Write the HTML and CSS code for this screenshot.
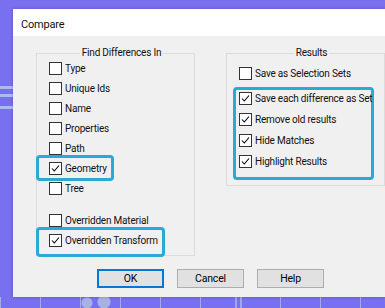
FILE: index.html
```html
<!DOCTYPE html>
<html lang="en">
<head>
    <meta charset="UTF-8">
    <meta name="viewport" content="width=device-width, initial-scale=1.0">
    <title>Compare</title>
    <link rel="stylesheet" href="styles.css">
</head>
<body>
    <div class="dialog">
        <div class="titlebar">Compare</div>
        <div class="dialog-body">
            <div class="groups">
                <fieldset class="group group-find">
                    <legend>Find Differences In</legend>
                    <div class="rows">
                        <label class="check"><span class="box"></span>Type</label>
                        <label class="check"><span class="box"></span>Unique Ids</label>
                        <label class="check"><span class="box"></span>Name</label>
                        <label class="check"><span class="box"></span>Properties</label>
                        <label class="check"><span class="box"></span>Path</label>
                        <div class="mark mark-geometry">
                            <label class="check"><span class="box"><svg viewBox="0 0 11 11"><path d="M2 5.5 L4.3 8 L9 2.5"/></svg></span>Geometry</label>
                        </div>
                        <label class="check"><span class="box"></span>Tree</label>
                        <div class="spacer"></div>
                        <label class="check"><span class="box"></span>Overridden Material</label>
                        <div class="mark mark-transform">
                            <label class="check"><span class="box"><svg viewBox="0 0 11 11"><path d="M2 5.5 L4.3 8 L9 2.5"/></svg></span>Overridden Transform</label>
                        </div>
                    </div>
                </fieldset>

                <fieldset class="group group-results">
                    <legend>Results</legend>
                    <div class="rows">
                        <label class="check check-wide"><span class="box"></span>Save as Selection Sets</label>
                        <div class="mark mark-results">
                            <label class="check check-wide"><span class="box"><svg viewBox="0 0 11 11"><path d="M2 5.5 L4.3 8 L9 2.5"/></svg></span>Save each difference as Set</label>
                            <label class="check check-wide"><span class="box"><svg viewBox="0 0 11 11"><path d="M2 5.5 L4.3 8 L9 2.5"/></svg></span>Remove old results</label>
                            <label class="check check-wide"><span class="box"><svg viewBox="0 0 11 11"><path d="M2 5.5 L4.3 8 L9 2.5"/></svg></span>Hide Matches</label>
                            <label class="check check-wide"><span class="box"><svg viewBox="0 0 11 11"><path d="M2 5.5 L4.3 8 L9 2.5"/></svg></span>Highlight Results</label>
                        </div>
                    </div>
                </fieldset>
            </div>

            <div class="buttons">
                <button class="btn btn-default">OK</button>
                <button class="btn">Cancel</button>
                <button class="btn">Help</button>
            </div>
        </div>
    </div>
</body>
</html>
```

FILE: styles.css
```css
/* Page / desktop behind the dialog */
body {
  margin: 0;
  width: 385px;
  height: 308px;
  overflow: hidden;
  font-family: "Roboto", "Liberation Sans", sans-serif;
  font-size: 10px;
  letter-spacing: -0.2px;
  color: #111;
  background:
    linear-gradient(#a9bdf0, #a9bdf0) 0 86px / 13px 3px no-repeat,
    linear-gradient(#a9bdf0, #a9bdf0) 0 94px / 13px 3px no-repeat,
    linear-gradient(#a9bdf0, #a9bdf0) 0 106px / 13px 3px no-repeat,
    radial-gradient(circle, #a6b3e0 0 5px, transparent 6px) 80px 296px / 14px 14px no-repeat,
    radial-gradient(circle, #a6b3e0 0 6px, transparent 7px) 96px 294px / 16px 16px no-repeat,
    linear-gradient(90deg, #9ea7ea 0 2px, transparent 2px 5px, #9ea7ea 5px 7px, transparent 7px) 235px 297px / 10px 11px no-repeat,
    linear-gradient(90deg, #a4acec 0 1px, transparent 1px 4px) 280px 297px / 40px 11px repeat-x,
    #7870ee;
}

/* Dialog window */
.dialog {
  margin: 9px 0 0 13px;
  width: 372px;
  height: 288px;
  display: flex;
  flex-direction: column;
  box-shadow: 0 0 3px rgba(0, 0, 0, 0.25);
}

.titlebar {
  height: 27px;
  padding: 3px 0 0 8px;
  box-sizing: border-box;
  display: flex;
  align-items: center;
  background-color: #fff;
  font-size: 11px;
}

.dialog-body {
  flex: 1;
  background-color: #f0f0f0;
}

/* Group boxes */
.groups {
  display: flex;
  align-items: flex-start;
  padding: 11px 0 0 23px;
  gap: 31px;
}

.group {
  margin: 0;
  padding: 0 0 5px 12px;
  border: 1px solid #dcdcdc;
  min-width: 0;
}

.group legend {
  margin: 0 auto;
  padding: 0 2px;
  line-height: 12px;
}

.group-find {
  width: 163px;
  box-sizing: border-box;
}

.group-results {
  width: 163px;
  box-sizing: border-box;
}

.rows {
  margin-top: -1px;
  display: flex;
  flex-direction: column;
}

/* Checkbox rows */
.check {
  height: 20px;
  display: flex;
  align-items: center;
  white-space: nowrap;
}

.check-wide {
  height: 21px;
}

.box {
  width: 13px;
  height: 13px;
  margin-right: 3px;
  box-sizing: border-box;
  border: 1px solid #333;
  background-color: #fff;
  flex-shrink: 0;
}

.box svg {
  display: block;
  width: 11px;
  height: 11px;
  fill: none;
  stroke: #000;
  stroke-width: 1.1;
}

.spacer {
  height: 12px;
}

.group-results .rows {
  margin-top: 4px;
}

/* Blue annotation outlines */
.mark {
  border: 3px solid #2aa8d6;
  border-radius: 4px;
}

.mark-geometry {
  width: 78px;
  box-sizing: border-box;
  margin: -3px 0 -3px -13px;
  padding-left: 10px;
}

.mark-transform {
  width: 129px;
  box-sizing: border-box;
  margin: -3px 0 -7px -13px;
  padding: 0 0 4px 10px;
}

.mark-results {
  width: 141px;
  box-sizing: border-box;
  margin: 3px 0 0 -6px;
  padding: 0 0 5px 3px;
}

.mark-results .check:first-child {
  margin-top: -2px;
}

/* Buttons */
.buttons {
  display: flex;
  gap: 13px;
  padding: 13px 0 0 84px;
}

.btn {
  width: 67px;
  height: 19px;
  padding: 0;
  font-family: inherit;
  font-size: 10.5px;
  letter-spacing: -0.2px;
  color: #000;
  background-color: #e1e1e1;
  border: 1px solid #adadad;
}

.btn-default {
  border: 1px solid #0078d7;
  box-shadow: inset 0 0 0 1px #0078d7;
}
```
